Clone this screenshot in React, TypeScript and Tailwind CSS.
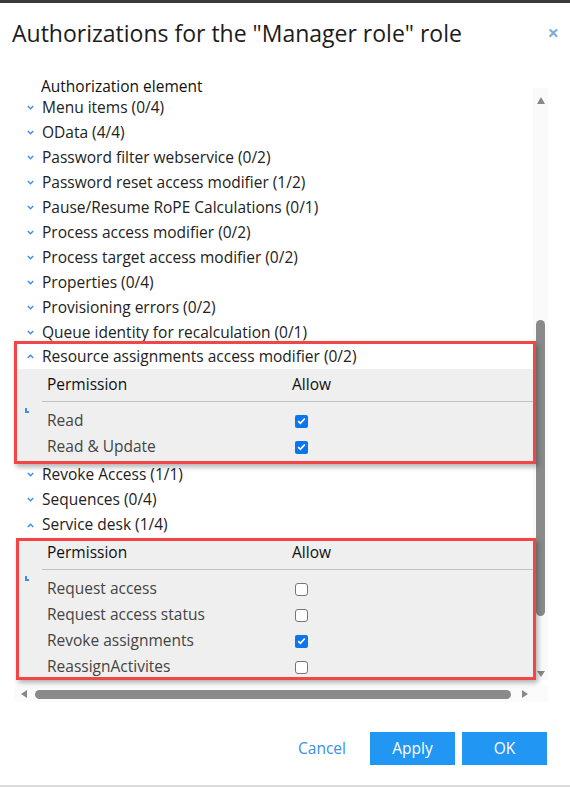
import React from 'react';

const font = { fontFamily: '"Open Sans", "Noto Sans", sans-serif' };

const Chevron: React.FC<{ open?: boolean }> = ({ open }) => (
  <svg width="7" height="5" viewBox="0 0 7 5" className="shrink-0">
    {open ? (
      <polyline points="0.8,4 3.5,1.2 6.2,4" fill="none" stroke="#3d8ee6" strokeWidth="1.4" />
    ) : (
      <polyline points="0.8,1 3.5,3.8 6.2,1" fill="none" stroke="#3d8ee6" strokeWidth="1.4" />
    )}
  </svg>
);

const Row: React.FC<{ label: string; open?: boolean; className?: string }> = ({ label, open, className = '' }) => (
  <div className={`flex h-[25px] items-center pl-[13px] text-[15.5px] text-[#222] ${className}`}>
    <Chevron open={open} />
    <span className="ml-[8px] whitespace-nowrap">{label}</span>
  </div>
);

const Check: React.FC<{ checked: boolean }> = ({ checked }) =>
  checked ? (
    <span className="flex h-[13px] w-[13px] items-center justify-center rounded-[2px] bg-[#0b75f0]">
      <svg width="9" height="8" viewBox="0 0 9 8">
        <polyline points="1.2,4.2 3.4,6.3 7.8,1.5" fill="none" stroke="#fff" strokeWidth="1.8" />
      </svg>
    </span>
  ) : (
    <span className="h-[13px] w-[13px] rounded-[3px] border border-[#767676] bg-white" />
  );

const PermRow: React.FC<{ label: string; checked: boolean }> = ({ label, checked }) => (
  <div className="flex h-[26px] items-center text-[15.5px] text-[#444]">
    <span className="w-[278px] whitespace-nowrap pl-[30px]">{label}</span>
    <Check checked={checked} />
  </div>
);

const Marker = () => (
  <div className="absolute left-[8px] h-[5px] w-[4px] border-b-2 border-l-2 border-[#3d8ee6]" />
);

const collapsed = [
  'Menu items (0/4)',
  'OData (4/4)',
  'Password filter webservice (0/2)',
  'Password reset access modifier (1/2)',
  'Pause/Resume RoPE Calculations (0/1)',
  'Process access modifier (0/2)',
  'Process target access modifier (0/2)',
  'Properties (0/4)',
  'Provisioning errors (0/2)',
  'Queue identity for recalculation (0/1)',
];

export default function App() {
  return (
    <div style={font} className="relative h-[787px] w-[570px] overflow-hidden border-t-[3px] border-[#3a3a3a] bg-white">
      {/* Title */}
      <div className="flex h-[58px] items-center justify-between pl-[12px] pr-[11px] pt-[2px]">
        <h1 className="text-[23px] leading-[30px] text-[#1c1c1c]">Authorizations for the "Manager role" role</h1>
        <span className="text-[20px] font-bold leading-none text-[#7aaedc]">×</span>
      </div>

      {/* Grid area */}
      <div className="ml-[14px] mt-[17px] w-[534px]">
        <div className="h-[17px] pl-[27px] text-[15.5px] leading-[17px] text-[#111]">Authorization element</div>
        <div className="flex">
          <div className="w-[522px]">
            {collapsed.map((r) => (
              <Row key={r} label={r} />
            ))}

            {/* Highlighted group 1 */}
            <div className="relative -mt-[4px] h-[123px] overflow-hidden border-[3px] border-[#f24545] shadow-[2px_3px_5px_rgba(0,0,0,0.3)]">
              <div className="-ml-[3px] bg-white">
                <Row label="Resource assignments access modifier (0/2)" open />
              </div>
              <div className="bg-[#efefef]">
                <div className="h-[32px] pt-[4px]">
                  <div className="flex text-[15.5px] leading-[22px] text-[#111]">
                    <span className="w-[275px] pl-[30px]">Permission</span>
                    <span>Allow</span>
                  </div>
                </div>
                <div className="ml-[25px] h-px bg-[#c2c2c2]" />
                <div className="relative pt-[6px]">
                  <Marker />
                  <PermRow label="Read" checked />
                  <PermRow label="Read & Update" checked />
                  <div className="h-[4px]" />
                </div>
              </div>
            </div>

            <Row label="Revoke Access (1/1)" className="-mt-[2px]" />
            <Row label="Sequences (0/4)" />
            <Row label="Service desk (1/4)" open className="h-[26px]" />

            {/* Highlighted group 2 */}
            <div className="relative ml-[2px] h-[142px] overflow-hidden border-[3px] border-[#f24545] bg-[#efefef] shadow-[2px_3px_5px_rgba(0,0,0,0.3)]">
              <div className="h-[28px]">
                <div className="flex text-[15.5px] leading-[22px] text-[#111]">
                  <span className="w-[273px] pl-[28px]">Permission</span>
                  <span>Allow</span>
                </div>
              </div>
              <div className="ml-[23px] h-px bg-[#c2c2c2]" />
              <div className="relative -ml-[2px] pt-[6px]">
                <Marker />
                <PermRow label="Request access" checked={false} />
                <PermRow label="Request access status" checked={false} />
                <PermRow label="Revoke assignments" checked />
                <PermRow label="ReassignActivites" checked={false} />
              </div>
            </div>
          </div>

          {/* Vertical scrollbar */}
          <div className="-ml-[3px] -mt-[7px] flex w-[15px] flex-col items-center bg-[#fafafa] pb-[2px]">
            <div className="mt-[9px] h-0 w-0 border-x-[4.5px] border-b-[7px] border-x-transparent border-b-[#888]" />
            <div className="mt-[216px] h-[296px] w-[9px] rounded-[5px] bg-[#8a8a8a]" />
            <div className="mt-[55px] h-0 w-0 border-x-[4.5px] border-t-[6px] border-x-transparent border-t-[#888]" />
          </div>
        </div>

        {/* Horizontal scrollbar */}
        <div className="mt-[6px] flex h-[16px] w-[534px] items-center bg-[#fbfbfb] pl-[7px]">
          <div className="h-0 w-0 border-y-[4.5px] border-r-[6px] border-y-transparent border-r-[#888]" />
          <div className="ml-[8px] h-[9px] w-[476px] rounded-[5px] bg-[#8a8a8a]" />
          <div className="ml-[11px] h-0 w-0 border-y-[4.5px] border-l-[6px] border-y-transparent border-l-[#888]" />
        </div>
      </div>

      {/* Footer */}
      <div className="mt-[30px] flex items-center justify-end pr-[23px]">
        <span className="mr-[24px] text-[15.5px] text-[#3d8ee6]">Cancel</span>
        <button className="h-[33px] w-[85px] bg-[#2196f3] text-[15.5px] text-white">Apply</button>
        <button className="ml-[7px] h-[33px] w-[85px] bg-[#2196f3] text-[15.5px] text-white">OK</button>
      </div>
      <div className="absolute bottom-0 left-0 h-[2px] w-full bg-[#dcdcdc]" />
    </div>
  );
}
